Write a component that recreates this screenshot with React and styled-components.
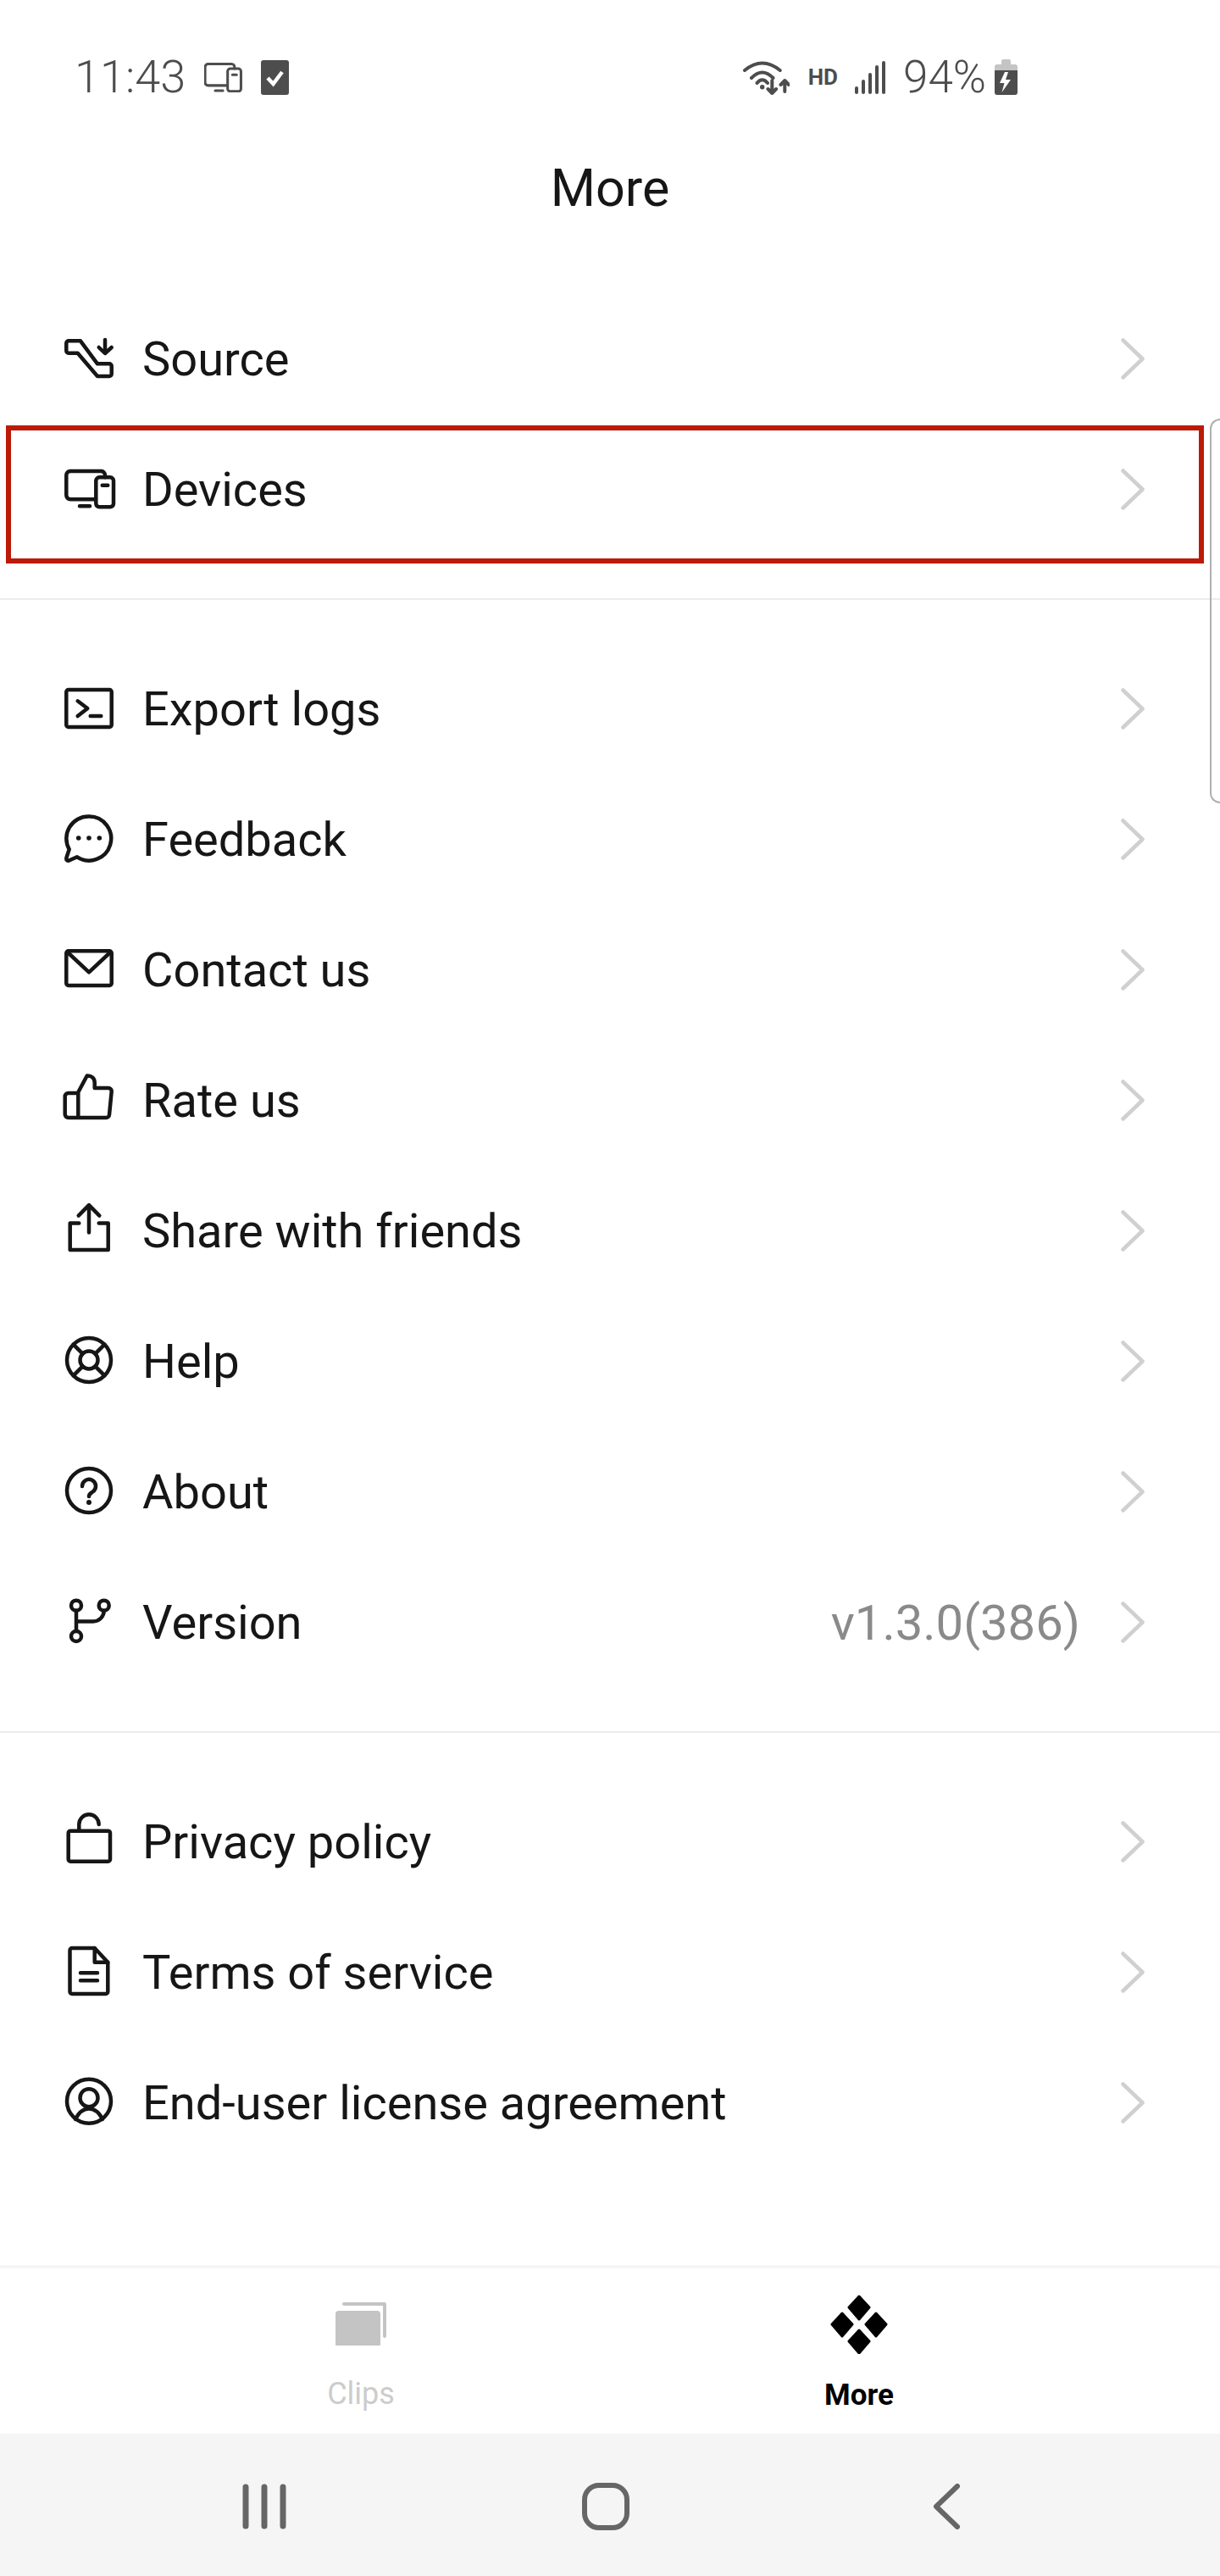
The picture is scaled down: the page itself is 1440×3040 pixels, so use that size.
import React from 'react';
import styled, { createGlobalStyle } from 'styled-components';

const GlobalStyle = createGlobalStyle`
    html, body {
        margin: 0;
        padding: 0;
        background: #fff;
    }

    * {
        box-sizing: border-box;
    }
`;

const MenuIcon = ({ children }) => (
    <IconSvg viewBox="0 0 64 64">{children}</IconSvg>
);

const devicesPaths = (
    <>
        <path d="M41 44.3H11a4.7 4.7 0 0 1-4.7-4.7V15.7A4.7 4.7 0 0 1 11 11h36.5a4.7 4.7 0 0 1 4.5 4.7v2.6" />
        <rect x="41.3" y="18.3" width="20.7" height="35" rx="4" />
        <path d="M48.7 27.7h6.6M22 52.3h12" />
    </>
);

const icons = {
    source: (
        <>
            <path d="M9 11.3h14L43 38.3h14a2.7 2.7 0 0 1 2.7 2.7v9.3a2.7 2.7 0 0 1-2.7 2.7H43L19.7 25.7H9a2.7 2.7 0 0 1-2.7-2.7v-9a2.7 2.7 0 0 1 2.7-2.7z" />
            <path d="M52 10v15.7M44.7 19l7.3 7 7.7-7" />
        </>
    ),
    devices: devicesPaths,
    logs: (
        <>
            <rect x="6.3" y="10" width="53.4" height="44" rx="2.5" />
            <path d="M19.7 23.3 31.3 32l-11.6 9M34.7 41h12.6" />
        </>
    ),
    feedback: (
        <>
            <path d="M33 5.5A26 26 0 1 1 19 53.3L9.5 57.5Q5.5 58.5 6.5 54L9.7 44.3A26 26 0 0 1 33 5.5z" />
            <circle className="dot" cx="20.7" cy="31" r="2.8" />
            <circle className="dot" cx="33" cy="31" r="2.8" />
            <circle className="dot" cx="45.3" cy="31" r="2.8" />
        </>
    ),
    contact: (
        <>
            <rect x="6.3" y="10.3" width="53.4" height="40.7" rx="2.5" />
            <path d="M8 12l25 23.3L58 12" />
        </>
    ),
    rate: (
        <>
            <path d="M20.3 53V23L30.7 3.5c5-.5 9 3 9 8V18H56a3.7 3.7 0 0 1 3.7 4L57 49.5a3.7 3.7 0 0 1-3.7 3.5H8.7a4 4 0 0 1-4-4V28a4 4 0 0 1 4-4h11.6" />
        </>
    ),
    share: (
        <>
            <path d="M33 2.2v32.2M20.7 14.7 33 2.2l12.3 12.5" />
            <path d="M21.3 23.6H10.7V55h45V23.6H44.7" />
        </>
    ),
    help: (
        <>
            <circle cx="33" cy="31" r="26" />
            <circle cx="33" cy="31" r="10.5" />
            <path d="M14.6 12.6l11 11M51.4 12.6l-11 11M14.6 49.4l11-11M51.4 49.4l-11-11" />
        </>
    ),
    about: (
        <>
            <circle cx="33" cy="31" r="26" />
            <path d="M25 26a8 8 0 1 1 12.5 6.5c-3 2-4.5 2.5-4.5 5.5" />
            <circle className="dot" cx="33" cy="45" r="3" />
        </>
    ),
    version: (
        <>
            <circle cx="18" cy="12.7" r="6" />
            <circle cx="50.7" cy="12.7" r="6" />
            <circle cx="18" cy="49" r="6" />
            <path d="M18 18.7V43M18 31.5h20a12.7 12.7 0 0 0 12.7-12.7" />
        </>
    ),
    privacy: (
        <>
            <rect x="8.7" y="19.7" width="49.3" height="36" rx="2.5" />
            <path d="M21.3 19.7V12a11.7 11.7 0 0 1 23.4 0" />
        </>
    ),
    terms: (
        <>
            <path d="M13 4h26.7l15.6 16.7V55.5a2.5 2.5 0 0 1-2.5 2.5H13a2.5 2.5 0 0 1-2.5-2.5v-49A2.5 2.5 0 0 1 13 4z" />
            <path d="M39.7 4v16.7h15.6M23 33.3h20M23 42.3h20" />
        </>
    ),
    eula: (
        <>
            <circle cx="33" cy="30.7" r="26" />
            <circle cx="33" cy="26.7" r="10.5" />
            <path d="M17 52c4-8 10-12.5 16-12.5S45 44 49 52" />
        </>
    ),
};

const sections = [
    [
        { icon: 'source', label: 'Source' },
        { icon: 'devices', label: 'Devices', marked: true },
    ],
    [
        { icon: 'logs', label: 'Export logs' },
        { icon: 'feedback', label: 'Feedback' },
        { icon: 'contact', label: 'Contact us' },
        { icon: 'rate', label: 'Rate us' },
        { icon: 'share', label: 'Share with friends' },
        { icon: 'help', label: 'Help' },
        { icon: 'about', label: 'About' },
        { icon: 'version', label: 'Version', value: 'v1.3.0(386)' },
    ],
    [
        { icon: 'privacy', label: 'Privacy policy' },
        { icon: 'terms', label: 'Terms of service' },
        { icon: 'eula', label: 'End-user license agreement' },
    ],
];

const App = () => (
    <Page>
        <GlobalStyle />
        <StatusBar>
            <StatusGroup>
                <Clock>11:43</Clock>
                <DevicesStatus viewBox="5 9 59 46">{devicesPaths}</DevicesStatus>
                <svg width="33" height="41" viewBox="0 0 33 41">
                    <rect width="33" height="41" rx="3" fill="#4d4d4d" />
                    <path d="M8 21l6.5 7L25 14" fill="none" stroke="#fff" strokeWidth="4.5" />
                </svg>
            </StatusGroup>
            <StatusGroup>
                <svg width="55" height="41" viewBox="0 0 55 41" fill="none" stroke="#4d4d4d" strokeWidth="4" strokeLinecap="round" strokeLinejoin="round">
                    <path d="M2 12Q22.7-5 43.7 12M10 21Q22.7 8 35.5 21M16.5 27q6.200-7.500 12.500 0" />
                    <circle cx="22.7" cy="31.700" r="2.700" fill="#4d4d4d" stroke="none" />
                    <path d="M34.300 24v15M29.500 34l4.800 5 4.800-5M49.300 37V24M44.500 29l4.800-5 4.800 5" />
                </svg>
                <NetworkBadge>HD</NetworkBadge>
                <svg width="37" height="39" viewBox="0 0 37 39" stroke="#4d4d4d" strokeWidth="4" strokeLinecap="round">
                    <path d="M2 37V32M10 37V24M18 37V16M26 37V7M34 37V2" />
                </svg>
                <Battery>94%</Battery>
                <svg width="27" height="42" viewBox="0 0 27 42">
                    <path d="M8 2a2 2 0 0 1 2-2h7a2 2 0 0 1 2 2v4h5a3 3 0 0 1 3 3v4H0V9a3 3 0 0 1 3-3h5z" fill="#c4c4c4" />
                    <path d="M0 13h27v26a3 3 0 0 1-3 3H3a3 3 0 0 1-3-3z" fill="#4d4d4d" />
                    <path d="M12 15 6 28h5.500L8.500 39 19 24h-6l3-9z" fill="#fff" />
                </svg>
            </StatusGroup>
        </StatusBar>

        <Title>More</Title>

        <List>
            {sections.map((rows, i) => (
                <Section key={i}>
                    {rows.map((row) => (
                        <Row key={row.label}>
                            <MenuIcon>{icons[row.icon]}</MenuIcon>
                            <Label>{row.label}</Label>
                            {row.value && <Value>{row.value}</Value>}
                            <Chevron viewBox="0 0 28 49">
                                <path d="M2.500 2.500 25.500 24.500 2.500 46.500" />
                            </Chevron>
                            {row.marked && <Highlight />}
                        </Row>
                    ))}
                </Section>
            ))}
        </List>

        <ScrollHandle />

        <TabBar>
            <Tab>
                <svg width="60" height="51" viewBox="0 0 60 51" fill="#c4c4c4">
                    <rect y="10" width="53" height="43" rx="4" />
                    <path d="M10 0h48a2 2 0 0 1 2 2v38a2 2 0 0 1-4 0V4H10a2 2 0 0 1 0-4z" />
                </svg>
                <TabLabel>Clips</TabLabel>
            </Tab>
            <Tab $active>
                <svg width="70" height="70" viewBox="0 0 70 70" fill="#000" stroke="#000" strokeWidth="3" strokeLinejoin="round">
                    <path d="M35 2l12 13-12 14-12-14zM15 22l12 13-12 14L3 35zM55 22l12 13-12 14-12-14zM35 42l12 13-12 14-12-14z" />
                </svg>
                <TabLabel>More</TabLabel>
            </Tab>
        </TabBar>

        <NavBar>
            <NavButton>
                <svg width="56" height="56" viewBox="0 0 56 56" stroke="#666" strokeWidth="7" strokeLinecap="round">
                    <path d="M6 5v46M28 5v46M50 5v46" />
                </svg>
            </NavButton>
            <NavButton>
                <svg width="56" height="56" viewBox="0 0 56 56" fill="none">
                    <rect x="3" y="3" width="50" height="50" rx="17" stroke="#666" strokeWidth="6" />
                </svg>
            </NavButton>
            <NavButton>
                <svg width="34" height="54" viewBox="0 0 34 54" fill="none" stroke="#666" strokeWidth="6" strokeLinecap="round" strokeLinejoin="round">
                    <path d="M29 3 4 27l25 24" />
                </svg>
            </NavButton>
        </NavBar>
    </Page>
);

export default App;

const Page = styled.div`
    position: relative;
    width: 1440px;
    height: 3040px;
    display: flex;
    flex-direction: column;
    overflow: hidden;
    background: #fff;
    color: #161616;
    font-family: 'Roboto', sans-serif;
`;

const StatusBar = styled.div`
    height: 182px;
    padding: 0 239px 0 88px;
    display: flex;
    align-items: center;
    justify-content: space-between;
    color: #4d4d4d;
`;

const StatusGroup = styled.div`
    display: flex;
    align-items: center;
    gap: 22px;
`;

const Clock = styled.span`
    font-size: 54px;
    font-weight: 300;
    line-height: 1;
`;

const DevicesStatus = styled.svg`
    width: 45px;
    height: 35px;
    fill: none;
    stroke: #4d4d4d;
    stroke-width: 4;
    stroke-linecap: round;
    stroke-linejoin: round;
`;

const NetworkBadge = styled.span`
    margin-right: -2px;
    font-size: 26px;
    font-weight: 700;
    line-height: 1;
`;

const Battery = styled.span`
    margin: 0 -12px 0 -2px;
    font-size: 53px;
    font-weight: 300;
    line-height: 1;
`;

const Title = styled.h1`
    margin: 0 0 84px;
    height: 80px;
    font-size: 61px;
    font-weight: 400;
    line-height: 80px;
    text-align: center;
`;

const List = styled.div`
    display: flex;
    flex-direction: column;
`;

const Section = styled.div`
    padding: 0 0 52px;
    border-bottom: 2px solid #ececec;

    & + & {
        padding-top: 51px;
    }

    &:last-child {
        border-bottom: 0;
    }
`;

const Row = styled.div`
    position: relative;
    height: 154px;
    padding: 0 89px 0 72px;
    display: flex;
    align-items: center;
`;

const IconSvg = styled.svg`
    flex: none;
    width: 64px;
    height: 64px;
    overflow: visible;
    fill: none;
    stroke: #161616;
    stroke-width: 4.500;
    stroke-linecap: round;
    stroke-linejoin: round;

    .dot {
        fill: #161616;
        stroke: none;
    }
`;

const Label = styled.span`
    flex: 1;
    margin-left: 32px;
    padding-top: 2px;
    font-size: 56px;
    line-height: 1;
`;

const Value = styled.span`
    margin-right: 48px;
    padding-top: 2px;
    font-size: 58px;
    line-height: 1;
    color: #8a8a8a;
`;

const Chevron = styled.svg`
    flex: none;
    width: 28px;
    height: 49px;
    fill: none;
    stroke: #d0d0d0;
    stroke-width: 4.500;
    stroke-linecap: round;
    stroke-linejoin: round;
`;

const Highlight = styled.div`
    position: absolute;
    top: 2px;
    left: 7px;
    right: 19px;
    height: 163px;
    border: 6px solid #bb1a08;
`;

const ScrollHandle = styled.div`
    position: absolute;
    top: 494px;
    right: 0;
    width: 12px;
    height: 454px;
    border: 2px solid #b0b0b0;
    border-right: 0;
    border-radius: 12px 0 0 12px;
`;

const TabBar = styled.div`
    margin-top: auto;
    height: 199px;
    padding: 0 132px;
    display: grid;
    grid-template-columns: 1fr 1fr;
    border-top: 4px solid #f6f6f6;
`;

const Tab = styled.div`
    padding-top: ${({ $active }) => ($active ? '31px' : '40px')};
    display: flex;
    flex-direction: column;
    align-items: center;
    gap: ${({ $active }) => ($active ? '32px' : '40px')};
    color: ${({ $active }) => ($active ? '#000' : '#cccccc')};
    font-size: ${({ $active }) => ($active ? '35px' : '36px')};
    font-weight: ${({ $active }) => ($active ? 700 : 400)};
`;

const TabLabel = styled.span`
    line-height: 34px;
`;

const NavBar = styled.div`
    height: 168px;
    padding: 4px 10px 0 0;
    display: grid;
    grid-template-columns: repeat(3, 403px);
    justify-content: center;
    align-items: center;
    background: #f5f5f5;
`;

const NavButton = styled.div`
    display: flex;
    justify-content: center;
    align-items: center;
`;
